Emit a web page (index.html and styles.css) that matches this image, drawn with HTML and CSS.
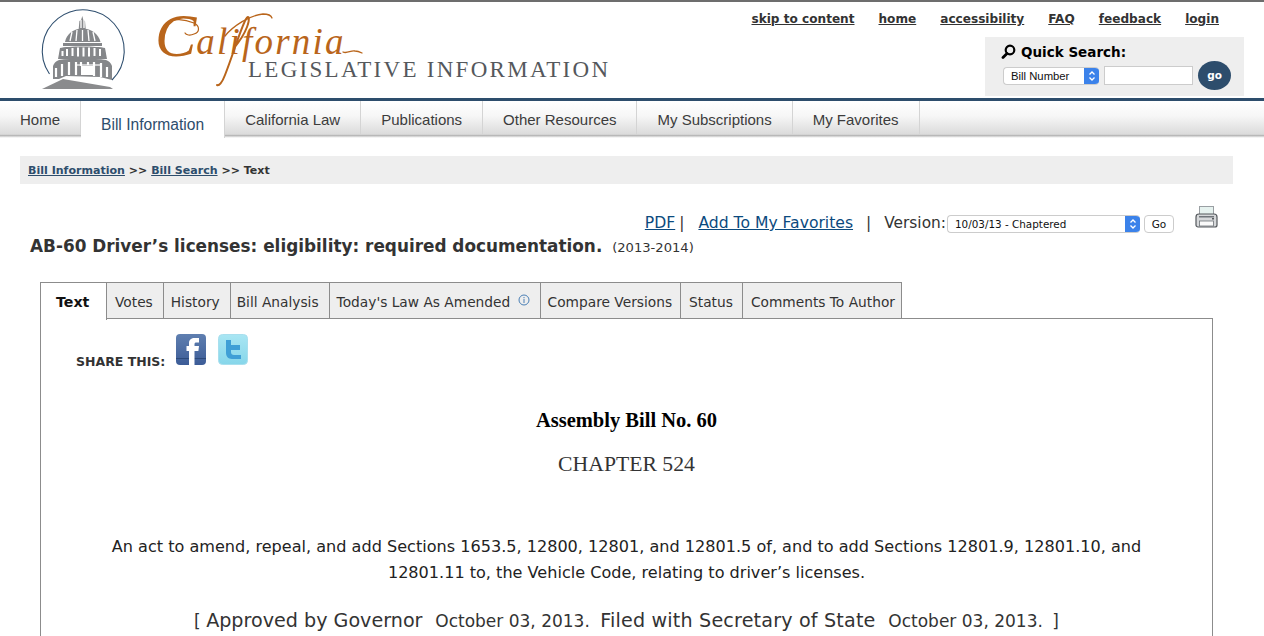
FILE: index.html
```html
<!DOCTYPE html>
<html lang="en">
<head>
<meta charset="utf-8">
<title>AB-60 Driver's licenses</title>
<link rel="stylesheet" href="styles.css">
</head>
<body>
<header class="masthead">
  <a class="logo" href="#">
    <svg class="logo-svg" width="620" height="96" viewBox="0 0 620 96">
      <path d="M49.500 72A41 41 0 1 1 112 78" fill="none" stroke="#2f4f6f" stroke-width="1.100"/>
      <g fill="#85878a">
        <path d="M82.300 14l1 4 1.700 1 .7 8h-7l.7-8 1.700-1z"/>
        <path d="M65 40c1.500-8 8.500-13.500 17.500-13.500S98.500 32 100.500 40z"/>
        <path d="M63 41h39v3H63z"/>
        <path d="M60 46c7-2 38-2 45 0l2 11H58z"/>
        <path d="M53 64c1-3 3-5 6-6 12-2 35-2 47 0 3 1 5 3 6 6v14l-12-3-34-1-7 3h-6z"/>
      </g>
      <path d="M42 87l21-10 47 8 3 2z" fill="#8a8b8d"/>
      <g stroke="#fff" stroke-width="1.300" fill="none">
        <path d="M72 30l-2 9M77 28l-1 11M82.500 28v11M88 28l1 11M93 30l2 9"/>
        <path d="M81 18v8M84 18v8"/>
      </g>
      <g stroke="#fff" stroke-width="2" fill="none">
        <path d="M67 47v7M72.500 46v8M78 45.500v9M83.500 45.500v9M89 45.500v9M94.500 46v8M100 47v7M62.500 49v5"/>
      </g>
      <g stroke="#fff" stroke-width="2.200" fill="none">
        <path d="M56 66v9M62 62v12M69 60v13M81 60v4M76 60v13M88 60v3M94 60v14M101 61v14M107 65v10"/>
        <path d="M76 63h24" stroke-width="1.200"/>
      </g>
      <path d="M81 64h13v9H81z" fill="#fff"/>
      <g fill="none" stroke="#b9651b" stroke-linecap="round">
        <path d="M217 83c2 1 5-2 8-10 8-20 15-45 21-56 3-5 4 0 1 8-3 8-8 15-13 21" stroke-width="2"/>
        <path d="M225 34c8-10 25-21 38-22 5 0 8 1 9 4" stroke-width="1.300"/>
        <path d="M168 21c5-5 16-4 26 0 6 3 6 9 0 11-4 2-8 1-9-1" stroke-width="1.200"/>
        <path d="M343 50c4 2 8-2 12-1 3 0 5 1 7 2" stroke-width="1.300"/>
      </g>
      <text class="logo-script" x="155" y="54"><tspan class="logo-cap">C</tspan><tspan class="logo-low" y="52">alifornia</tspan></text>
      <text class="logo-serif" x="248" y="75" textLength="360">LEGISLATIVE INFORMATION</text>
    </svg>
  </a>
  <div class="top-right">
    <nav class="util-links">
      <a href="#">skip to content</a>
      <a href="#">home</a>
      <a href="#">accessibility</a>
      <a href="#">FAQ</a>
      <a href="#">feedback</a>
      <a href="#">login</a>
    </nav>
    <form class="quick-search">
      <div class="qs-title">
        <svg width="15" height="15" viewBox="0 0 15 15"><circle cx="9" cy="6" r="4.300" fill="none" stroke="#000" stroke-width="2.200"/><path d="M6 9.500L2 13.500" stroke="#000" stroke-width="2.800" stroke-linecap="round"/></svg>
        <span>Quick Search:</span>
      </div>
      <div class="qs-row">
        <div class="fake-select qs-select"><span class="fake-value">Bill Number</span><span class="fake-arrow"><svg width="8" height="12" viewBox="0 0 8 12"><path d="M1.500 4.500L4 2l2.500 2.500M1.500 7.500L4 10l2.500-2.500" fill="none" stroke="#fff" stroke-width="1.300"/></svg></span></div>
        <div class="qs-input"></div>
        <div class="qs-go">go</div>
      </div>
    </form>
  </div>
</header>
<nav class="main-nav">
  <a href="#" class="first">Home</a>
  <a href="#" class="active">Bill Information</a>
  <a href="#">California Law</a>
  <a href="#">Publications</a>
  <a href="#">Other Resources</a>
  <a href="#">My Subscriptions</a>
  <a href="#">My Favorites</a>
</nav>
<main class="page">
  <div class="crumbs"><a href="#">Bill Information</a> &gt;&gt; <a href="#">Bill Search</a> &gt;&gt; Text</div>
  <div class="tools">
    <a href="#">PDF</a><span class="sep1">|</span>
    <a href="#">Add To My Favorites</a><span class="sep2">|</span>
    <span class="ver-label">Version:</span>
    <div class="fake-select ver-select"><span class="fake-value">10/03/13 - Chaptered</span><span class="fake-arrow"><svg width="8" height="12" viewBox="0 0 8 12"><path d="M1.500 4.500L4 2l2.500 2.500M1.500 7.500L4 10l2.500-2.500" fill="none" stroke="#fff" stroke-width="1.300"/></svg></span></div>
    <div class="go-btn">Go</div>
    <svg class="printer" width="23" height="22" viewBox="0 0 23 22">
      <rect x="4.500" y="0.500" width="14" height="11" fill="#e6f2ef" stroke="#9a9fa3"/>
      <path d="M1 11c0-2 1-3 3-3h15c2 0 3 1 3 3v8c0 1-1 2-2 2H3c-1 0-2-1-2-2z" fill="#d6d8da" stroke="#54585c" stroke-width="1.200"/>
      <rect x="4" y="10" width="15" height="1.500" fill="#70757a"/>
      <rect x="4.500" y="15" width="14" height="5" fill="#fafafa" stroke="#6b7075" stroke-width=".8"/>
      <rect x="17" y="12" width="2" height="1.500" fill="#55595d"/>
    </svg>
  </div>
  <h1 class="bill-title">AB-60 Driver’s licenses: eligibility: required documentation. <small>(2013-2014)</small></h1>
  <ul class="tabs">
    <li class="on">Text</li>
    <li class="votes">Votes</li>
    <li>History</li>
    <li class="tight">Bill Analysis</li>
    <li>Today's Law As Amended
      <svg class="info" width="12" height="12" viewBox="0 0 12 12"><circle cx="6" cy="6" r="5" fill="none" stroke="#4a7fb5"/><path d="M6 5v4M6 3v1.200" stroke="#4a7fb5"/></svg>
    </li>
    <li class="tighter">Compare Versions</li>
    <li class="status">Status</li>
    <li class="last">Comments To Author</li>
  </ul>
  <section class="panel">
    <div class="share">
      <span class="share-label">SHARE THIS:</span>
      <a class="soc fb" href="#" aria-label="Facebook"><svg width="30" height="31" viewBox="0 0 30 31"><defs><linearGradient id="fbg" x1="0" y1="0" x2="0" y2="1"><stop offset="0" stop-color="#5f7fb0"/><stop offset="1" stop-color="#3c5c97"/></linearGradient></defs><rect width="30" height="31" rx="4" fill="url(#fbg)"/><rect y="24" width="30" height="1" fill="#2c4a7a"/><path d="M13 31V17h-2.500v-5H13V9c0-3.500 2.500-5 5.500-5H23v4.500h-2.500c-1.500 0-2 .6-2 2V12H23l-.6 5h-3.900v14z" fill="#fff"/></svg></a>
      <a class="soc tw" href="#" aria-label="Twitter"><svg width="30" height="31" viewBox="0 0 30 31"><defs><linearGradient id="twg" x1="0" y1="0" x2="0" y2="1"><stop offset="0" stop-color="#a9e6f3"/><stop offset="1" stop-color="#86d6ea"/></linearGradient></defs><rect x=".5" y=".5" width="29" height="30" rx="4" fill="url(#twg)" stroke="#a8dfee"/><path d="M8 6h5v5h9v5h-9v2c0 2 1 3 3 3h7v4H14c-4 0-6-3-6-6z" fill="#3f9fd6"/></svg></a>
    </div>
    <h2 class="bill-no">Assembly Bill No. 60</h2>
    <h3 class="chapter">CHAPTER 524</h3>
    <p class="act">An act to amend, repeal, and add Sections 1653.5, 12800, 12801, and 12801.5 of, and to add Sections 12801.9, 12801.10, and 12801.11 to, the Vehicle Code, relating to driver’s licenses.</p>
    <p class="approved">[ <span class="big">Approved by Governor</span> &nbsp;October 03, 2013. <span class="big filed">Filed with Secretary of State</span> &nbsp;October 03, 2013. <span class="end">]</span></p>
  </section>
</main>
</body>
</html>
```
FILE: styles.css
```css
* { box-sizing: border-box; }
html, body { margin: 0; padding: 0; height: 636px; overflow: hidden; background: #fff; }
body { font-family: "DejaVu Sans", Verdana, sans-serif; color: #222; }
a { color: inherit; }

.masthead { height: 101px; border-top: 2px solid #6d6d6d; border-bottom: 3px solid #2d4d6c; display: flex; justify-content: space-between; }
.logo { display: block; width: 620px; height: 96px; text-decoration: none; }
.logo-svg { display: block; }
.logo-script { font-family: "Liberation Serif", serif; font-style: italic; fill: #b9651b; }
.logo-cap { font-size: 62px; }
.logo-low { font-size: 37px; letter-spacing: 2.200px; }
.logo-serif { font-family: "Liberation Serif", serif; font-size: 23px; fill: #55585c; }

.top-right { width: 280px; margin-right: 20px; display: flex; flex-direction: column; align-items: flex-end; }
.util-links { display: flex; gap: 24px; margin: 10px 25px 0 0; font-size: 12.100px; font-weight: bold; color: #333; white-space: nowrap; line-height: 15px; }
.quick-search { width: 259px; height: 59px; margin-top: 10px; background: #eee; padding: 4px 13px 0 16px; }
.qs-title { display: flex; align-items: center; gap: 5px; height: 21px; font-size: 13.500px; font-weight: bold; color: #000; }
.qs-row { display: flex; align-items: center; gap: 5px; margin: -1px 0 0 2px; }

.fake-select { display: flex; align-items: stretch; background: #fff; border: 1px solid #ccc; border-right: 0; border-radius: 4px; overflow: hidden; font-family: "Liberation Sans", sans-serif; font-size: 11.300px; color: #111; }
.fake-value { flex: 1; padding-left: 7px; white-space: nowrap; }
.fake-arrow { width: 15px; background: #3b82ea; display: flex; align-items: center; justify-content: center; }
.qs-select { width: 96px; height: 18px; line-height: 16px; }
.qs-input { width: 89px; height: 19px; background: #fff; border: 1px solid #ccc; }
.qs-go { width: 33px; height: 29px; border-radius: 50%; background: #2d4d6c; color: #fff; font-size: 10.500px; font-weight: bold; text-align: center; line-height: 29px; }

.main-nav { height: 37px; display: flex; align-items: flex-start; background: linear-gradient(#fff 0, #f7f7f7 40%, #dcdcdc 88%, #d2d2d2 91%, #b8b8b8 92%, #b8b8b8 94%, #e6e6e6 97%, #fff 100%); font-family: "Liberation Sans", sans-serif; font-size: 15px; color: #3c3c3c; }
.main-nav a { height: 33px; padding: 0 20px; line-height: 37px; text-decoration: none; border-right: 1px solid #d4d4d4; white-space: nowrap; }
.main-nav a.active { height: 37px; background: #fff; font-size: 15.600px; line-height: 47px; color: #2d4d6c; }

.page { padding: 18px 31px 0 20px; }
.crumbs { height: 28px; background: #eee; padding-left: 8px; font-size: 11.050px; font-weight: bold; line-height: 29px; color: #333; }
.crumbs a { color: #2d4d6c; }

.tools { display: flex; align-items: center; justify-content: flex-end; height: 26px; margin: 26px 20px 0 0; font-size: 15.400px; color: #333; }
.tools > a { color: #0b4a7e; font-size: 15.600px; }
.tools > .sep1 { margin: 0 14px 0 4px; }
.tools > .sep2 { margin: 0 13px; }
.tools > .ver-label { margin-right: 1px; }
.ver-select { width: 193px; height: 18px; margin-top: 2px; line-height: 16px; font-family: "DejaVu Sans", sans-serif; font-size: 10.400px; }
.go-btn { width: 30px; height: 18px; margin: 2px 0 0 4px; background: #fff; border: 1px solid #ccc; border-radius: 4px; font-family: "DejaVu Sans", sans-serif; font-size: 10.500px; line-height: 16px; text-align: center; color: #111; }
.printer { margin: -12px -5px 0 21px; }

.bill-title { margin: -1px 0 0 10px; font-size: 16.880px; font-weight: bold; color: #333; line-height: 22px; height: 22px; white-space: nowrap; }
.bill-title small { font-size: 13.100px; font-weight: normal; margin-left: 4px; }

.tabs { list-style: none; margin: 25px 0 0 20px; padding: 0; display: flex; height: 37px; position: relative; z-index: 1; font-size: 13.750px; color: #333; }
.tabs li { padding: 0 10px 0 7px; background: #eee; border: 1px solid #8c8c8c; border-left: 0; line-height: 38px; white-space: nowrap; }
.tabs li.on { width: 67px; padding: 0 15px; background: #fff; border-left: 1px solid #8c8c8c; border-bottom: 0; font-size: 14.200px; font-weight: bold; color: #111; height: 38px; }
.tabs li.votes { padding: 0 10px 0 8px; }
.tabs li.tight { padding: 0 10px 0 6px; }
.tabs li.tighter { padding: 0 8px 0 7px; }
.tabs li.status { padding: 0 9px 0 8px; }
.tabs li.last { padding: 0 6px 0 8px; }
.info { vertical-align: 1px; margin-left: 3px; }

.panel { margin: -1px 20px 0 20px; border: 1px solid #8c8c8c; border-bottom: 0; height: 330px; }
.share { height: 44px; padding: 15px 0 0 35px; display: flex; align-items: flex-start; }
.share-label { margin-top: 21px; font-size: 12.500px; font-weight: bold; color: #333; line-height: 14px; }
.soc { display: block; margin-left: 11px; width: 30px; height: 31px; }
.soc svg { display: block; }
.tw { margin-left: 12px; }

.bill-no { margin: 42px 0 0; text-align: center; font-family: "Liberation Serif", serif; font-size: 20.500px; font-weight: bold; color: #000; line-height: 30px; }
.chapter { margin: 14px 0 0; text-align: center; font-family: "Liberation Serif", serif; font-size: 21.700px; font-weight: normal; color: #333; line-height: 30px; }
.act { margin: 55px 60px 0; text-align: center; font-size: 16.080px; line-height: 26px; color: #222; }
.approved { margin: 23px 0 0; text-align: center; font-size: 17px; line-height: 24px; color: #333; white-space: nowrap; }
.approved .big { font-size: 19.150px; margin-right: 2px; }
.approved .filed { margin-left: 5px; letter-spacing: .17px; }
.approved .end { margin-left: 4px; }
```
